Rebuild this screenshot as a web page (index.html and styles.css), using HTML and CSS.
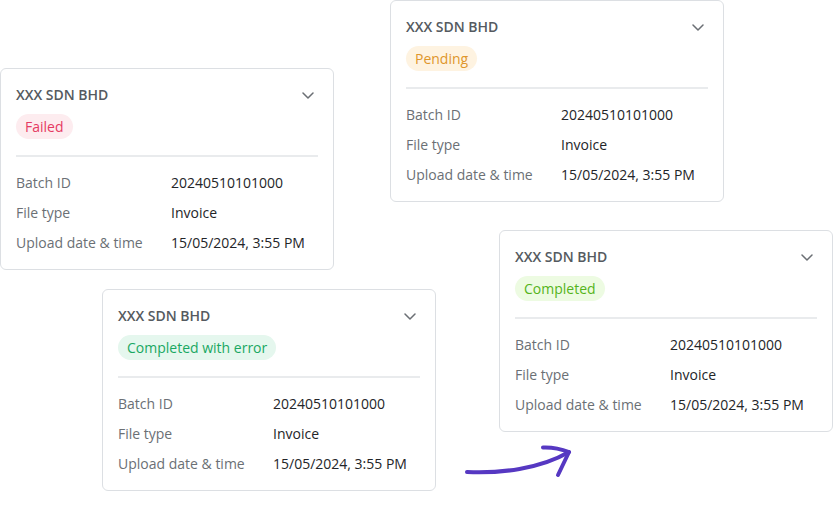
FILE: index.html
```html
<!DOCTYPE html>
<html lang="en">
<head>
<meta charset="utf-8">
<title>Batch status cards</title>
<link rel="stylesheet" href="styles.css">
</head>
<body>
<div class="canvas">
  <section class="card card-failed">
    <header class="card-head">
      <h2 class="company">XXX SDN BHD</h2>
      <svg class="chevron" width="12" height="7" viewBox="0 0 12 7"><path d="M1 1l5 5 5-5" fill="none" stroke="#6b6f74" stroke-width="1.5" stroke-linecap="round" stroke-linejoin="round"/></svg>
    </header>
    <span class="badge badge-failed">Failed</span>
    <hr class="divider">
    <dl class="details">
      <div class="row"><dt>Batch ID</dt><dd>20240510101000</dd></div>
      <div class="row"><dt>File type</dt><dd>Invoice</dd></div>
      <div class="row"><dt>Upload date &amp; time</dt><dd>15/05/2024, 3:55 PM</dd></div>
    </dl>
  </section>

  <section class="card card-pending">
    <header class="card-head">
      <h2 class="company">XXX SDN BHD</h2>
      <svg class="chevron" width="12" height="7" viewBox="0 0 12 7"><path d="M1 1l5 5 5-5" fill="none" stroke="#6b6f74" stroke-width="1.5" stroke-linecap="round" stroke-linejoin="round"/></svg>
    </header>
    <span class="badge badge-pending">Pending</span>
    <hr class="divider">
    <dl class="details">
      <div class="row"><dt>Batch ID</dt><dd>20240510101000</dd></div>
      <div class="row"><dt>File type</dt><dd>Invoice</dd></div>
      <div class="row"><dt>Upload date &amp; time</dt><dd>15/05/2024, 3:55 PM</dd></div>
    </dl>
  </section>

  <section class="card card-error">
    <header class="card-head">
      <h2 class="company">XXX SDN BHD</h2>
      <svg class="chevron" width="12" height="7" viewBox="0 0 12 7"><path d="M1 1l5 5 5-5" fill="none" stroke="#6b6f74" stroke-width="1.5" stroke-linecap="round" stroke-linejoin="round"/></svg>
    </header>
    <span class="badge badge-error">Completed with error</span>
    <hr class="divider">
    <dl class="details">
      <div class="row"><dt>Batch ID</dt><dd>20240510101000</dd></div>
      <div class="row"><dt>File type</dt><dd>Invoice</dd></div>
      <div class="row"><dt>Upload date &amp; time</dt><dd>15/05/2024, 3:55 PM</dd></div>
    </dl>
  </section>

  <section class="card card-done">
    <header class="card-head">
      <h2 class="company">XXX SDN BHD</h2>
      <svg class="chevron" width="12" height="7" viewBox="0 0 12 7"><path d="M1 1l5 5 5-5" fill="none" stroke="#6b6f74" stroke-width="1.5" stroke-linecap="round" stroke-linejoin="round"/></svg>
    </header>
    <span class="badge badge-done">Completed</span>
    <hr class="divider">
    <dl class="details">
      <div class="row"><dt>Batch ID</dt><dd>20240510101000</dd></div>
      <div class="row"><dt>File type</dt><dd>Invoice</dd></div>
      <div class="row"><dt>Upload date &amp; time</dt><dd>15/05/2024, 3:55 PM</dd></div>
    </dl>
  </section>

  <svg class="arrow" width="833" height="512" viewBox="0 0 833 512">
    <path d="M467 472 C 500 473.5, 540 469, 569 452" fill="none" stroke="#5638c2" stroke-width="4" stroke-linecap="round"/>
    <path d="M543 447.5 Q 556 447 569 452 L 558 475" fill="none" stroke="#5638c2" stroke-width="4" stroke-linecap="round" stroke-linejoin="round"/>
  </svg>
</div>
</body>
</html>
```

FILE: styles.css
```css
* { box-sizing: border-box; }

html, body {
  margin: 0;
  padding: 0;
  background: #ffffff;
}

body {
  font-family: "Open Sans", "Noto Sans", sans-serif;
  font-size: 14px;
  color: #222427;
}

.canvas {
  position: relative;
  width: 833px;
  height: 512px;
  overflow: hidden;
}

.card {
  position: absolute;
  width: 334px;
  height: 202px;
  background: #ffffff;
  border: 1px solid #dcdfe3;
  border-radius: 6px;
  padding: 15px 15px 0 15px;
  display: flex;
  flex-direction: column;
  align-items: flex-start;
}

.card-failed  { left: 0;     top: 68px; }
.card-pending { left: 390px; top: 0; }
.card-error   { left: 102px; top: 289px; }
.card-done    { left: 499px; top: 230px; }

.card-head {
  width: 100%;
  height: 22px;
  display: flex;
  align-items: center;
  justify-content: space-between;
}

.company {
  margin: 0;
  font-size: 14px;
  font-weight: 600;
  line-height: 22px;
  color: #555a60;
}

.chevron {
  margin-right: 4px;
  display: block;
}

.badge {
  margin-top: 8px;
  height: 25px;
  line-height: 25px;
  padding: 0 9px;
  border-radius: 13px;
  font-size: 14px;
}

.badge-failed  { background: #fdecef; color: #e53a62; }
.badge-pending { background: #fef3e1; color: #df962b; }
.badge-error   { background: #e5f7ee; color: #19a862; }
.badge-done    { background: #edfbe2; color: #55b41b; }

.divider {
  width: 100%;
  margin: 16px 0 0 0;
  border: 0;
  border-top: 2px solid #e9ebed;
  height: 0;
}

.details {
  margin: 15px 0 0 0;
  width: 100%;
  display: flex;
  flex-direction: column;
  gap: 8px;
}

.row {
  display: flex;
  line-height: 22px;
}

.row dt {
  width: 155px;
  color: #6b7075;
}

.row dd {
  margin: 0;
  color: #232528;
}

.arrow {
  position: absolute;
  left: 0;
  top: 0;
  pointer-events: none;
}
```
